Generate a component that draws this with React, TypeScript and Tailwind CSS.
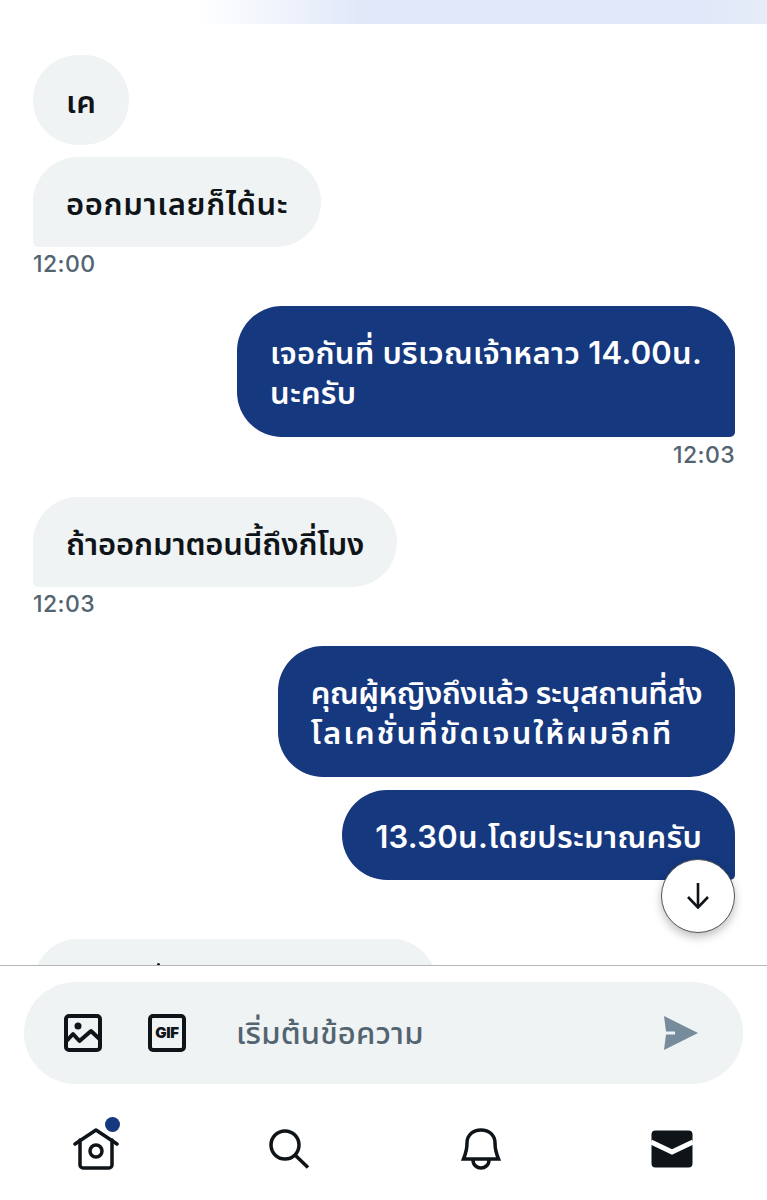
const FONT = "font-['Inter','Noto_Sans','Noto_Sans_Thai','Liberation_Sans',sans-serif]";
const BUBBLE = "w-fit pt-[27px] pb-[23px] px-[33px] text-[31px] leading-[40px] font-semibold";
const TIME = "text-[23px] leading-[30px] font-medium tracking-[0.4px] text-[#536471]";

function In({ children, time, cls = "", round = false }: { children: React.ReactNode; time?: string; cls?: string; round?: boolean }) {
  return (
    <div className={`flex flex-col items-start ${cls}`}>
      <div className={`${BUBBLE} rounded-[45px] ${round ? "" : "rounded-bl-[5px]"} bg-[#eff3f4] text-[#0f1419]`}>{children}</div>
      {time && <div className={`mt-[2px] ${TIME}`}>{time}</div>}
    </div>
  );
}

function Out({ children, time, cls = "", round = false }: { children: React.ReactNode; time?: string; cls?: string; round?: boolean }) {
  return (
    <div className={`flex flex-col items-end ${cls}`}>
      <div className={`${BUBBLE} rounded-[45px] ${round ? "" : "rounded-br-[5px]"} bg-[#16387f] text-white`}>{children}</div>
      {time && <div className={`mt-[3px] ${TIME}`}>{time}</div>}
    </div>
  );
}

function ImageIcon() {
  return (
    <svg width="38" height="38" viewBox="0 0 38 38" fill="none" stroke="#0f1419" strokeWidth="4" strokeLinejoin="round">
      <rect x="2" y="2" width="34" height="34" rx="3" />
      <circle cx="14" cy="12" r="3.5" fill="#0f1419" stroke="none" />
      <polyline points="2.5,27 9,20 15.5,27 27,17 35.5,25" />
    </svg>
  );
}

function SendIcon() {
  return (
    <svg width="34" height="34" viewBox="0 0 34 34" fill="#768b9b">
      <path d="M0 0 L34 17 L0 34 L2 18.5 L11 18.5 L11 15.5 L2 15.5 Z" />
    </svg>
  );
}

function HomeIcon() {
  return (
    <svg width="46" height="42" viewBox="0 0 46 42" fill="none" stroke="#0f1419" strokeWidth="3.5" strokeLinejoin="round" strokeLinecap="round">
      <path d="M2 16 L23 2 L44 16" />
      <path d="M7 12 V37 A3 3 0 0 0 10 40 H36 A3 3 0 0 0 39 37 V12" />
      <circle cx="23" cy="23" r="6" />
    </svg>
  );
}

function SearchIcon() {
  return (
    <svg width="42" height="42" viewBox="0 0 42 42" fill="none" stroke="#0f1419" strokeWidth="3.5">
      <circle cx="16" cy="17" r="14" />
      <path d="M26.5 27.5 L39 39.5" />
    </svg>
  );
}

function BellIcon() {
  return (
    <svg width="40" height="42" viewBox="0 0 40 42" fill="none" stroke="#0f1419" strokeWidth="3.5" strokeLinejoin="miter">
      <path d="M2.5 31 C5 25 6 22 6 15 C6 7 12 2 20 2 C28 2 34 7 34 15 C34 22 35 25 37.5 31 Z" />
      <path d="M12 32 C12 37 16 40 20 40 C24 40 28 37 28 32" />
    </svg>
  );
}

function MailIcon() {
  return (
    <svg width="42" height="38" viewBox="0 0 42 38">
      <rect x="0.5" y="0.5" width="41" height="37" rx="4" fill="#0f1419" />
      <polyline points="0,12 21,22 42,12" fill="none" stroke="#fff" strokeWidth="5" />
    </svg>
  );
}

export default function App() {
  return (
    <div className={`flex h-[1200px] w-[767px] flex-col overflow-hidden bg-white ${FONT}`}>
      <div className="flex h-[24px] shrink-0 justify-center overflow-hidden bg-[linear-gradient(90deg,#fff_26%,#dfe7f8_48%,#dfe7f8_90%,#e6ecf8_100%)]">
        <span className="-mt-[27px] text-[28px] leading-[30px] font-medium tracking-[3px] text-[#536471]">2024</span>
      </div>

      <div className="relative flex h-[941px] shrink-0 flex-col overflow-hidden pt-[31px] pr-[32px] pl-[33px]">
        <In round>
          <span className="tracking-[0.5px]">เค</span>
        </In>
        <In time="12:00" cls="mt-[12px]">
          <span className="tracking-[0.62px]">ออกมาเลยก็ได้นะ</span>
        </In>
        <Out time="12:03" cls="mt-[27px]">
          <div className="pb-[1px] tracking-[0.23px]">
            เจอกันที่ บริเวณเจ้าหลาว 14.00น.<br />นะครับ
          </div>
        </Out>
        <In time="12:03" cls="mt-[27px]">
          <span className="tracking-[-0.15px]">ถ้าออกมาตอนนี้ถึงกี่โมง</span>
        </In>
        <Out round cls="mt-[27px]">
          <div className="pb-[1px]">
            <span className="tracking-[-0.5px]">คุณผู้หญิงถึงแล้ว ระบุสถานที่ส่ง</span><br />
            <span className="tracking-[2px]">โลเคชั่นที่ขัดเจนให้ผมอีกที</span>
          </div>
        </Out>
        <Out cls="mt-[13px]">
          <span className="tracking-[0.28px]">13.30น.โดยประมาณครับ</span>
        </Out>
        <div className="relative mt-[59px] h-[90px] w-[404px] shrink-0 rounded-[45px] bg-[#eff3f4]">
          <span className="absolute top-[24px] left-[124px] h-[3px] w-[3px] rounded-full bg-[#0f1419]" />
        </div>
        <button className="absolute top-[835px] right-[32px] flex h-[74px] w-[74px] items-center justify-center rounded-full border border-[#555] bg-white shadow-[0_4px_10px_rgba(0,0,0,0.25)]">
          <svg width="22" height="26" viewBox="0 0 22 26" fill="none" stroke="#0f1419" strokeWidth="2.6">
            <path d="M11 0 V24" />
            <path d="M1 14 L11 24.5 L21 14" />
          </svg>
        </button>
      </div>

      <div className="flex-1 border-t border-[#b5b5b8]">
        <div className="mx-[24px] mt-[16px] flex h-[102px] items-center rounded-[51px] bg-[#eff3f4] pr-[45px] pl-[40px]">
          <ImageIcon />
          <div className="ml-[46px] flex h-[38px] w-[38px] items-center justify-center rounded-[5px] border-[4px] border-[#0f1419] text-[15px] font-black tracking-[-0.3px] text-[#0f1419]">
            GIF
          </div>
          <span className="ml-[50px] flex-1 text-[31px] font-medium tracking-[0.2px] text-[#536471]">เริ่มต้นข้อความ</span>
          <SendIcon />
        </div>
        <div className="mt-[44px] flex items-center justify-between pr-[74px] pl-[73px]">
          <div className="relative">
            <HomeIcon />
            <span className="absolute -top-[11px] -right-[1px] h-[15px] w-[15px] rounded-full bg-[#16387f]" />
          </div>
          <SearchIcon />
          <BellIcon />
          <MailIcon />
        </div>
      </div>
    </div>
  );
}
